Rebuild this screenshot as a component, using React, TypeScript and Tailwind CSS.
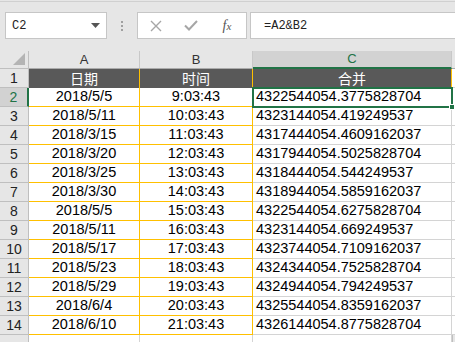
import React from "react";

const rows: [string, string, string][] = [
  ["2018/5/5", "9:03:43", "4322544054.3775828704"],
  ["2018/5/11", "10:03:43", "4323144054.419249537"],
  ["2018/3/15", "11:03:43", "4317444054.4609162037"],
  ["2018/3/20", "12:03:43", "4317944054.5025828704"],
  ["2018/3/25", "13:03:43", "4318444054.544249537"],
  ["2018/3/30", "14:03:43", "4318944054.5859162037"],
  ["2018/5/5", "15:03:43", "4322544054.6275828704"],
  ["2018/5/11", "16:03:43", "4323144054.669249537"],
  ["2018/5/17", "17:03:43", "4323744054.7109162037"],
  ["2018/5/23", "18:03:43", "4324344054.7525828704"],
  ["2018/5/29", "19:03:43", "4324944054.794249537"],
  ["2018/6/4", "20:03:43", "4325544054.8359162037"],
  ["2018/6/10", "21:03:43", "4326144054.8775828704"],
];

const cellFont = { fontFamily: '"Liberation Sans", Arial, sans-serif' };

export default function App() {
  return (
    <div className="w-[455px] h-[342px] overflow-hidden bg-[#e6e6e6] relative" style={cellFont}>
      {/* toolbar */}
      <div className="h-[50px] border-t border-[#d0d0d0] mt-px flex items-start pt-[10px]">
        <div className="ml-[5px] w-[102px] h-[27px] bg-white border border-[#c6c6c6] flex items-center justify-between pl-[6px] pr-[6px]">
          <span className="text-[12px] text-[#222]" style={{ fontFamily: '"Liberation Mono", monospace' }}>C2</span>
          <svg width="9" height="5" viewBox="0 0 9 5"><path d="M0 0h9L4.5 5z" fill="#555" /></svg>
        </div>
        <div className="w-[30px] h-[27px] flex flex-col items-center justify-center gap-[2px]">
          <div className="w-[2px] h-[2px] bg-[#a0a0a0]" />
          <div className="w-[2px] h-[2px] bg-[#a0a0a0]" />
          <div className="w-[2px] h-[2px] bg-[#a0a0a0]" />
        </div>
        <div className="w-[110px] h-[27px] bg-white border border-[#c6c6c6] flex items-center">
          <div className="w-[36px] flex justify-center">
            <svg width="12" height="12" viewBox="0 0 12 12"><path d="M1 1L11 11M11 1L1 11" stroke="#a6a6a6" strokeWidth="1.4" /></svg>
          </div>
          <div className="w-[34px] flex justify-center">
            <svg width="14" height="11" viewBox="0 0 14 11"><path d="M1 5.5L5 9.5L13 1" stroke="#a6a6a6" strokeWidth="2" fill="none" /></svg>
          </div>
          <div className="w-[38px] flex justify-center">
            <span className="italic text-[14px] text-[#555] leading-none" style={{ fontFamily: '"Liberation Serif", serif' }}>f<span className="text-[11px]">x</span></span>
          </div>
        </div>
        <div className="ml-[3px] flex-1 h-[27px] bg-white border border-[#c6c6c6] border-r-0 flex items-center pl-[13px]">
          <span className="text-[12px] text-[#222]" style={{ fontFamily: '"Liberation Mono", monospace' }}>=A2&amp;B2</span>
        </div>
      </div>

      {/* grid */}
      <div className="grid grid-cols-[29px_111px_113px_199px_3px] grid-rows-[18px_repeat(14,19px)_19px] bg-white relative">
        {/* header row */}
        <div className="bg-[#e6e6e6] border-r border-b border-[#bfbfbf] relative">
          <svg className="absolute right-[3px] bottom-[3px]" width="12" height="12" viewBox="0 0 12 12"><path d="M12 0V12H0z" fill="#b4b4b4" /></svg>
        </div>
        <div className="bg-[#e6e6e6] border-r border-[#c8c8c8] border-b border-b-[#ababab] flex items-center justify-center text-[13px] text-[#333]">A</div>
        <div className="bg-[#e6e6e6] border-r border-[#c8c8c8] border-b border-b-[#ababab] flex items-center justify-center text-[13px] text-[#333]">B</div>
        <div className="bg-[#d2d2d2] border-r border-[#c8c8c8] border-b-2 border-b-[#217346] flex items-center justify-center text-[13px] text-[#217346]">C</div>
        <div className="bg-[#e6e6e6] border-b border-[#ababab]" />

        {/* row 1 */}
        <div className="bg-[#e6e6e6] border-r border-b border-[#bfbfbf] flex items-center justify-center text-[14px] text-[#222]">1</div>
        <div className="bg-[#595959] border-r border-[#ffc000] flex items-center justify-center text-[14px] text-white" style={{ fontFamily: '"Noto Sans CJK SC", sans-serif' }}>日期</div>
        <div className="bg-[#595959] border-r border-[#ffc000] flex items-center justify-center text-[14px] text-white" style={{ fontFamily: '"Noto Sans CJK SC", sans-serif' }}>时间</div>
        <div className="bg-[#595959] border-r border-[#ffc000] flex items-center justify-center text-[14px] text-white" style={{ fontFamily: '"Noto Sans CJK SC", sans-serif' }}>合并</div>
        <div className="bg-white border-b border-[#d4d4d4]" />

        {rows.map((r, i) => {
          const n = i + 2;
          const sel = n === 2;
          return (
            <React.Fragment key={n}>
              <div className={`border-b border-[#bfbfbf] flex items-center justify-center text-[14px] ${sel ? "bg-[#d2d2d2] border-r-2 border-r-[#217346] text-[#217346]" : "bg-[#e6e6e6] border-r border-r-[#bfbfbf] text-[#222]"}`}>{n}</div>
              <div className="border-r border-b border-[#ffc000] flex items-center justify-center text-[14.5px] text-black">{r[0]}</div>
              <div className="border-r border-b border-[#ffc000] flex items-center justify-center text-[14.5px] text-black">{r[1]}</div>
              <div className="border-r border-b border-[#d4d4d4] flex items-center pl-[3px] text-[14.5px] text-black">{r[2]}</div>
              <div className="border-b border-[#d4d4d4]" />
            </React.Fragment>
          );
        })}

        {/* row 15 */}
        <div className="bg-[#e6e6e6] border-r border-[#bfbfbf] flex items-start justify-center text-[14px] text-[#222] pt-[2px]">15</div>
        <div className="border-r border-[#d4d4d4]" />
        <div className="border-r border-[#d4d4d4]" />
        <div className="border-r border-[#d4d4d4]" />
        <div className="bg-[#e6e6e6] border-l border-[#bfbfbf]" />

        {/* selection */}
        <div className="absolute left-[252px] top-[36px] w-[201px] h-[21px] border-2 border-[#217346] pointer-events-none" />
        <div className="absolute left-[449px] top-[53px] w-[6px] h-[6px] bg-[#217346] border border-white" />
      </div>
    </div>
  );
}
